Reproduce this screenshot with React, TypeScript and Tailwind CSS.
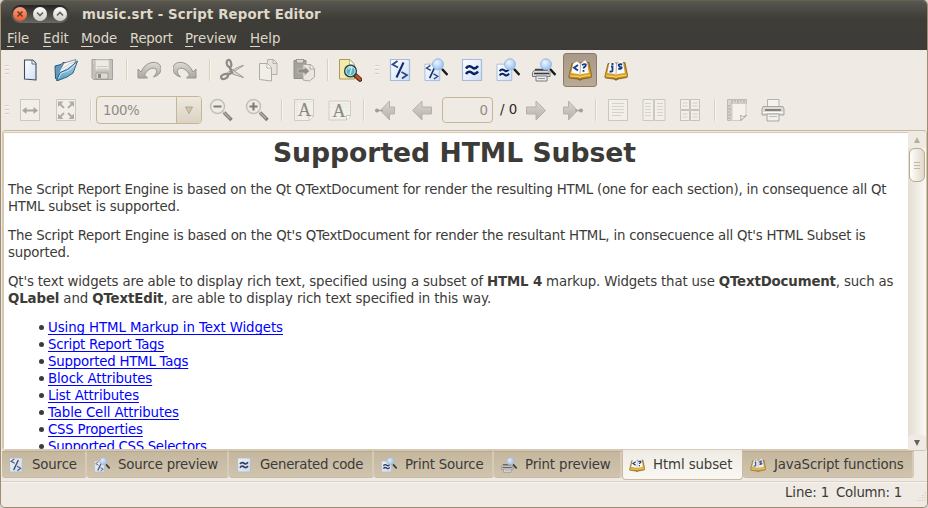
import React from "react";

type Kids = { children?: React.ReactNode };

const Icon = ({ children, size = 24, dim = false }: Kids & { size?: number; dim?: boolean }) => (
  <svg width={size} height={size} viewBox="0 0 24 24" fill="none" className={dim ? "shrink-0 opacity-80" : "shrink-0"}>
    {children}
  </svg>
);

const Cell = ({ children }: Kids) => <div className="flex h-9 w-9 shrink-0 items-center justify-center">{children}</div>;

const Sep = ({ wide = false }: { wide?: boolean }) => (
  <div className={`flex shrink-0 justify-center pl-[2px] ${wide ? "w-[11px]" : "w-[10px]"}`}>
    <div className="h-[22px] w-[2px] border-r border-[#f8f5ef] bg-[#d9d0bd]" />
  </div>
);

const Handle = () => (
  <div className="flex w-3 shrink-0 flex-col gap-[2px] pl-[5px]">
    {[0, 1, 2].map((i) => (
      <div key={i} className="h-[2px] w-[4px] border-b border-[#faf7f1] bg-[#d6cdb9]" />
    ))}
  </div>
);

/* ---- icon drawings, all on a 24 unit grid ---- */

const Defs = () => (
  <svg width="0" height="0" className="absolute">
    <defs>
      <linearGradient id="paper" x1="0" y1="0" x2="1" y2="1">
        <stop offset="0" stopColor="#ffffff" />
        <stop offset="1" stopColor="#cfdff5" />
      </linearGradient>
      <linearGradient id="blue" x1="0" y1="0" x2="0" y2="1">
        <stop offset="0" stopColor="#b5dcf0" />
        <stop offset="1" stopColor="#559bc3" />
      </linearGradient>
      <linearGradient id="grey" x1="0" y1="0" x2="0" y2="1">
        <stop offset="0" stopColor="#dedbd5" />
        <stop offset="1" stopColor="#a9a6a1" />
      </linearGradient>
      <linearGradient id="arrow" x1="0" y1="0" x2="0" y2="1">
        <stop offset="0" stopColor="#dad7d2" />
        <stop offset="1" stopColor="#b4b1ac" />
      </linearGradient>
      <linearGradient id="gold" x1="0" y1="0" x2="0" y2="1">
        <stop offset="0" stopColor="#b98420" />
        <stop offset=".75" stopColor="#dba62d" />
        <stop offset="1" stopColor="#8a5c0c" />
      </linearGradient>
      <radialGradient id="glass" cx=".4" cy=".35" r=".7">
        <stop offset="0" stopColor="#eef6ff" />
        <stop offset="1" stopColor="#8fbcf6" />
      </radialGradient>
    </defs>
  </svg>
);

const NewFile = () => (
  <>
    <path d="M6.500 2h8l3.500 3.500V22l-11.500-1z" fill="url(#paper)" stroke="#3d4b60" strokeWidth="1.100" strokeLinejoin="round" />
    <path d="M14 2v4h4" fill="#fff" stroke="#3d4b60" strokeWidth=".8" />
  </>
);
const OpenFolder = () => (
  <>
    <path d="M1 8l6-1.500 2-2 5 0v4L4.500 22 1.500 20.500z" fill="#5b9cc2" stroke="#31536a" />
    <path d="M4 16L10 5l12-3.500-3 9L7 18z" fill="#f5f6f7" stroke="#6a747d" strokeWidth=".8" />
    <path d="M8 11l8-5.500 5-1.500M6 15l9-6 6-2" stroke="#b9bfc5" strokeWidth=".8" />
    <path d="M2.500 22.500L6 14.500l7.500-3L23.500 3l-4.500 12-6 4-9 3.500z" fill="url(#blue)" stroke="#31617e" strokeLinejoin="round" />
    <path d="M4.500 20.500l2.500-5 7.500-3 7-6" stroke="#cfe9f5" strokeWidth=".9" />
  </>
);
const Save = () => (
  <>
    <path d="M2 1.500h20.500v20H3.500L2 20z" fill="#c4c0bb" stroke="#a5a19b" />
    <path d="M5.500 2h13.500v10h-13.500z" fill="#eeebe5" stroke="#d2cec8" />
    <path d="M7 8.500h10.500M7 11h10.500" stroke="#c9c5bf" />
    <path d="M6 15h12v6H6z" fill="#dedad4" stroke="#999691" strokeWidth=".8" />
    <path d="M8 16h3v4H8z" fill="#8b8782" />
    <path d="M3 3h1M3 5h1" stroke="#e7e3de" />
  </>
);
const Undo = () => (
  <path d="M1 11v9h9.500l-3-3c2-5 8.500-9 11.500-5.500 1.500 2.500 0 4.500-2.500 7.500 6-1.500 8-6 7.500-9.500C22.500 2 9 2 4 14z" fill="url(#grey)" stroke="#98958f" strokeWidth="1" strokeLinejoin="round" />
);
const Redo = () => <g transform="matrix(-1 0 0 1 24 0)"><Undo /></g>;
const Cut = () => (
  <>
    <path d="M23.500 7.500L9 16.500l-1.500-2L21 8z" fill="#f0ede8" stroke="#8b8882" strokeWidth=".8" />
    <path d="M10 10l13.500 9.500-11-3.500z" fill="#dedad4" stroke="#8b8882" strokeWidth=".8" />
    <ellipse cx="9" cy="5.500" rx="2.200" ry="3.600" transform="rotate(-15 9 5.500)" stroke="#8e8a84" strokeWidth="2.200" />
    <ellipse cx="4.500" cy="18.500" rx="3.600" ry="2.200" transform="rotate(-25 4.500 18.500)" stroke="#8e8a84" strokeWidth="2.200" />
    <path d="M9.500 9l2.500 5.500-4.500 2.500" stroke="#8e8a84" strokeWidth="2.500" />
  </>
);
const Copy = () => (
  <>
    <path d="M11.500 1.500h6l3.500 3.500v11.500h-10z" fill="#e7e3dc" stroke="#b4b0aa" />
    <path d="M17 1.500v4h4" stroke="#b4b0aa" />
    <path d="M3.500 5.500h8l4 4V23l-12-1.500z" fill="#f1eee8" stroke="#aeaaa4" />
    <path d="M11 5.500v4.500h4.500" fill="#fff" stroke="#b4b0aa" />
  </>
);
const Paste = () => (
  <>
    <path d="M2 2.500h12v18H2z" fill="#a5a19b" stroke="#928e88" />
    <path d="M4 1.500h8l-1 3.500H5z" fill="#dedad3" stroke="#8c8882" strokeWidth=".8" />
    <path d="M11 6.500h8l3.500 4V19l-5 4-6.500-1z" fill="#ebe7e0" stroke="#aca8a2" />
    <path d="M18 7v4h4" fill="#f6f3ee" stroke="#aca8a2" />
    <path d="M6 11h6.500V8.500L17.500 13l-5 4.500V15H6z" fill="#8f8b85" stroke="#d5d1ca" strokeWidth=".6" />
  </>
);
const PreviewDoc = () => (
  <>
    <path d="M1.500 1.500h10.500l4.500 5v14.500h-15z" fill="#f4eaa9" stroke="#a99b5e" />
    <path d="M11.500 2v5h5" fill="#fffce6" stroke="#b3a566" strokeWidth=".8" />
    <path d="M17 17l5 4.500" stroke="#432b1c" strokeWidth="4.600" strokeLinecap="round" />
    <path d="M18.500 18l3.500 3.300" stroke="#c65320" strokeWidth="2.800" strokeLinecap="round" />
    <circle cx="12.500" cy="13" r="5.800" fill="#58b4c2" stroke="#33474d" strokeWidth="1.600" />
    <circle cx="12.500" cy="13" r="4.600" stroke="#d3e5e7" />
    <path d="M10 11.500q2-3 4-2l-2 7" stroke="#b8f0ef" strokeWidth="1.300" />
  </>
);
const BluePage = () => <path d="M2.500 1.500h19v21h-19z" fill="url(#paper)" stroke="#a5bbdc" strokeWidth="1.200" />;
const CodeMarks = () => (
  <>
    <path d="M15.500 4.500L8.500 19.500" stroke="#162d6e" strokeWidth="2.100" />
    <path d="M9.500 3L4.500 6.500l5.500 3M13.500 14l5.500 3-5 3.500" stroke="#28468c" strokeWidth="1.700" />
  </>
);
const Waves = () => (
  <g stroke="#082161" strokeWidth="2.600">
    <path d="M6 10.500c2.500-4 5.500-1.500 7-.5s3 .5 5-2" />
    <path d="M6 16c2.500-4 5.500-1.500 7-.5s3 .5 5-2" />
  </g>
);
const Lens = () => (
  <>
    <path d="M18 11l5.500 6" stroke="#17191d" strokeWidth="2.500" />
    <circle cx="14" cy="6.300" r="5.500" fill="url(#glass)" stroke="#9db8dc" />
  </>
);
const Source = () => <><BluePage /><CodeMarks /></>;
const SourcePreview = () => (
  <><g transform="translate(-1 5) scale(.78)"><BluePage /><CodeMarks /></g><Lens /></>
);
const Generated = () => <><BluePage /><Waves /></>;
const PrintSource = () => <><g transform="translate(-1 5) scale(.78)"><BluePage /><Waves /></g><Lens /></>;
const Printer = () => (
  <>
    <path d="M6.500 1.500h11.500v8h-11.500z" fill="#f5f4f1" stroke="#a8a5a0" />
    <path d="M2 8.500h20l1 2.500v6H1v-6z" fill="#d8d6d2" stroke="#98958f" />
    <path d="M4 12h16" stroke="#5e5b57" strokeWidth="1.800" />
    <path d="M2 14.500h20" stroke="#fff" />
    <path d="M6 16h12v7H6z" fill="#f3f2ef" stroke="#98958f" />
    <path d="M8 18.500h8" stroke="#b8b5af" />
  </>
);
const PrintPreview = () => (
  <>
    <path d="M2 12.500h14l2 2v4H.5v-4z" fill="#dcdcda" stroke="#75787b" />
    <path d="M3 11.500h12" stroke="#414549" strokeWidth="1.600" />
    <path d="M2 15.500h15" stroke="#33383d" strokeWidth="1.500" />
    <path d="M4 18h11v5H4z" fill="#eee" stroke="#777b80" />
    <path d="M6 20.500h7" stroke="#919599" />
    <Lens />
  </>
);
const Book = ({ js = false }: { js?: boolean }) => (
  <>
    <path d="M4 5.500L.8 18.500l.5 1.500 8.200 1 2.500 1.300 2.500-1.300 8.500-1.500.7-1.500L21 4.500z" fill="url(#gold)" stroke="#7a5410" strokeWidth=".7" strokeLinejoin="round" />
    <path d="M2.300 18l8.200.6 1.500 1 1.500-1 8.700-1.600" stroke="#f4d06a" strokeWidth="1.200" />
    <path d="M5.200 5.500L9 3.500l3.500 2.500L17 2.200l2.300 2.800 1.500 10-7.300 1-1.500.8-1.500-.8-7.200-.9z" fill="#fafaf6" />
    <path d="M12.500 6L12 16.500" stroke="#a3a196" strokeWidth=".8" />
    {js ? (
      <g stroke="#173a91" strokeWidth="1.800">
        <path d="M7 8.500h1.500v4q0 1.500-3 1M7.500 6h2M18.200 6.500q-4-.8-3.500 1t3 2q-.2 2-3.500 1.200" />
      </g>
    ) : (
      <g stroke="#173a91" strokeWidth="1.800">
        <path d="M10 7L6 9.800l4 2.700M14 7q4-2 3.800.2c0 2-2.300 1.300-2.300 3.300M15.500 12v1.800" />
      </g>
    )}
  </>
);
const GreyPage = ({ children }: Kids) => (
  <><path d="M2.500 1.500h19v21h-19z" fill="#f2efe9" stroke="#cbc7c1" />{children}</>
);
const FitWidth = () => (
  <GreyPage>
    <path d="M7 12.500h10" stroke="#aaa69f" strokeWidth="1.800" />
    <path d="M8.500 9v7L4 12.500zM15.500 9v7l4.500-3.500z" fill="#aaa69f" />
  </GreyPage>
);
const FitPage = () => (
  <GreyPage>
    <path d="M6 6l4 4M18 6l-4 4M6 19l4-4M18 19l-4-4" stroke="#b0aca5" strokeWidth="1.800" />
    <path d="M4 3.500h5.500L4 9zM20 3.500h-5.500L20 9zM4 21h5.500L4 15.500zM20 21h-5.500l5.500-5.500z" fill="#b0aca5" />
  </GreyPage>
);
const Zoomer = ({ plus = false }: { plus?: boolean }) => (
  <>
    <path d="M15 14.500l7.500 7.500" stroke="#817e78" strokeWidth="3.600" />
    <path d="M14.500 14l6.500 6.500" stroke="#b4b0aa" strokeWidth="1.300" />
    <circle cx="8.500" cy="8.500" r="7" fill="#eeebe5" stroke="#c3bfb9" strokeWidth="1.500" />
    <path d={plus ? "M4.500 8.500h8M8.500 4.500v8" : "M4.500 8.500h8"} stroke="#7f7b76" strokeWidth="2.100" />
  </>
);
const LetterPage = ({ land = false }: { land?: boolean }) => (
  <>
    <path d={land ? "M1 3h21.500v15l-4 4H1z" : "M2.500 1.500h19v17l-4 4h-15z"} fill="#f2efe9" stroke="#d0ccc5" />
    <path d={land ? "M18.500 22v-4.500h4" : "M17 22v-4h4.500"} fill="#fff" stroke="#c6c2bb" />
    <path d={land ? "M2 6h20M3 9h18" : "M5 2v20M3 4h18"} stroke="#dedad4" strokeDasharray="1 1" />
    <text x={land ? 11 : 12.500} y={land ? 19 : 18} textAnchor="middle" fontSize="18" fontFamily="Liberation Serif, serif" fill="#8c8882" stroke="#8c8882" strokeWidth=".2">A</text>
  </>
);
const Arrow = ({ dot = false }: { dot?: boolean }) => (
  <>
    <path d={dot ? "M6.500 12.500L15.500 3v6h5v7h-5v6z" : "M2.500 12.500L12 3v6h9.500v7H12v6z"} fill="url(#arrow)" stroke="#b4b0aa" />
    {dot && <><path d="M2 12.500h7" stroke="#a8a49e" strokeWidth="1.500" /><circle cx="3" cy="12.500" r="2" fill="#a19d97" /></>}
  </>
);
const Flip = ({ children }: Kids) => <g transform="matrix(-1 0 0 1 24 0)">{children}</g>;
const PageLines = () => <GreyPage><path d="M6 5.500h12M6 8.500h12M6 11.500h12M6 14.500h12M6 17.500h9" stroke="#d6d2cb" /></GreyPage>;
const TwoPages = () => (
  <>
    <path d="M1 1.500h10.500v21H1zM12.500 1.500H23v21H12.500z" fill="#f2efe9" stroke="#cbc7c1" />
    <path d="M3 5.500h6M3 8.500h6M3 11.500h6M3 14.500h6M15 5.500h6M15 8.500h6M15 11.500h6M15 14.500h6M3 17.500h6M15 17.500h6" stroke="#d6d2cb" />
  </>
);
const FourPages = () => (
  <>
    <path d="M2.500 1.500h9v10h-9zM12.500 1.500h9v10h-9zM2.500 12.500h9v10h-9zM12.500 12.500h9v10h-9z" fill="#f2efe9" stroke="#c6c2bb" />
    <path d="M4.500 5h5M4.500 8h5M14.500 5h5M14.500 8h5M4.500 16h5M4.500 19h5M14.500 16h5M14.500 19h5" stroke="#d2cec7" />
  </>
);
const PageSetup = () => (
  <>
    <path d="M2.500 1.500h19v4H6v17H2.500z" fill="#d9d5cf" stroke="#bfbbb4" />
    <path d="M7 5.500h14V18l-5 4.500H7z" fill="#f5f2ed" stroke="#d0ccc5" />
    <path d="M15.500 22.500q1-2 0-5 3 2 6 0z" fill="#fff" stroke="#aaa69f" />
    <path d="M7 2v3M10 2v2M13 2v3M16 2v2M19 2v3M3 8h2M3 11h3M3 14h2M3 17h3M3 20h2" stroke="#9e9a94" strokeWidth=".8" />
  </>
);

const MENUS = [
  { label: "File", cls: "w-9" },
  { label: "Edit", cls: "w-[38px]" },
  { label: "Mode", cls: "w-[49px]" },
  { label: "Report", cls: "w-[55px] tracking-[-0.25px]" },
  { label: "Preview", cls: "w-[65px]" },
  { label: "Help", cls: "w-10" },
];

const LINKS = [
  { label: "Using HTML Markup in Text Widgets", cls: "tracking-[-0.09px]" },
  { label: "Script Report Tags", cls: "tracking-[-0.27px]" },
  { label: "Supported HTML Tags", cls: "tracking-[-0.22px]" },
  { label: "Block Attributes", cls: "tracking-[-0.12px]" },
  { label: "List Attributes", cls: "tracking-[-0.16px]" },
  { label: "Table Cell Attributes", cls: "tracking-[-0.13px]" },
  { label: "CSS Properties", cls: "tracking-[-0.22px]" },
  { label: "Supported CSS Selectors", cls: "tracking-[-0.31px]" },
];

const TABS = [
  { label: "Source", w: "w-[85px] pl-[6px] tracking-[-0.15px]", icon: <Source /> },
  { label: "Source preview", w: "w-[142px] pl-[7px] tracking-[-0.18px]", icon: <SourcePreview /> },
  { label: "Generated code", w: "w-[145px] pl-[7px] tracking-[-0.28px]", icon: <Generated /> },
  { label: "Print Source", w: "w-[120px] pl-[7px] tracking-[-0.18px]", icon: <PrintSource /> },
  { label: "Print preview", w: "w-[128px] pl-[7px] tracking-[-0.14px]", icon: <PrintPreview /> },
  { label: "Html subset", w: "w-[121px] pl-[6px] tracking-[-0.1px]", icon: <Book />, active: true },
  { label: "JavaScript functions", w: "w-[171px] pl-[7px] tracking-[-0.14px]", icon: <Book js /> },
];

const RoundButton = ({ close = false, d }: { close?: boolean; d: string }) => (
  <div className={`flex size-[14px] items-center justify-center rounded-full ${close ? "bg-linear-to-b from-[#f8a181] to-[#e8592c]" : "bg-linear-to-b from-white to-[#cfccc6]"}`}>
    <svg width="8" height="8" viewBox="0 0 8 8" fill="none">
      <path d={d} stroke={close ? "#6e3926" : "#65625b"} strokeWidth="1.600" />
    </svg>
  </div>
);

export default function App() {
  return (
    <div className="h-[508px] w-[928px] overflow-hidden bg-[#d8d8d8] font-['DejaVu_Sans',sans-serif] text-[13.33px] leading-[17px] whitespace-nowrap text-[#3c3b37]">
      <Defs />
      <div className="flex h-[508px] flex-col overflow-hidden rounded-[5px] border border-[#a08d70] border-t-[#68604f] bg-[#efebe4]">
        <header className="-mx-px h-[49px] shrink-0 border-x border-[#5b5347] bg-linear-to-b from-[#585750] via-[#3e3d38] via-35% to-[#3c3b37] text-[#dfd8c8]">
          <div className="flex h-[26px] items-center pl-[10px]">
            <div className="flex h-[18px] w-[58px] items-center justify-between rounded-full bg-linear-to-b from-[#252420] to-[#6a6963] px-[2px]">
              <RoundButton close d="M1.500 1.500l5 5m0-5l-5 5" />
              <RoundButton d="M1 2.500l3 3 3-3" />
              <RoundButton d="M1 5.500l3-3 3 3" />
            </div>
            <h1 className="ml-[13px] font-bold tracking-[0.13px]">music.srt - Script Report Editor</h1>
          </div>
          <nav className="flex h-[23px] items-center pl-[6px]">
            {MENUS.map(({ label, cls }) => (
              <span key={label} className={`${cls} shrink-0`}>
                <span className="border-b border-[#dfd8c8]">{label[0]}</span>{label.slice(1)}
              </span>
            ))}
          </nav>
        </header>

        <div className="-ml-px flex h-10 shrink-0 items-center">
          <Handle />
          <Cell><Icon><NewFile /></Icon></Cell>
          <Cell><Icon><OpenFolder /></Icon></Cell>
          <Cell><Icon><Save /></Icon></Cell>
          <Sep wide />
          <Cell><Icon><Undo /></Icon></Cell>
          <Cell><Icon><Redo /></Icon></Cell>
          <Sep wide />
          <Cell><Icon><Cut /></Icon></Cell>
          <Cell><Icon><Copy /></Icon></Cell>
          <Cell><Icon><Paste /></Icon></Cell>
          <Sep />
          <Cell><Icon><PreviewDoc /></Icon></Cell>
          <div className="w-[2px]" />
          <Handle />
          <Cell><Icon><Source /></Icon></Cell>
          <Cell><Icon><SourcePreview /></Icon></Cell>
          <Cell><Icon><Generated /></Icon></Cell>
          <Cell><Icon><PrintSource /></Icon></Cell>
          <Cell><Icon><PrintPreview /></Icon></Cell>
          <Cell>
            <div className="flex size-[34px] items-center justify-center rounded-[3px] border border-[#8d7b65] bg-linear-to-b from-[#a9998a] to-[#b9aa98]">
              <Icon><Book /></Icon>
            </div>
          </Cell>
          <Cell><Icon><Book js /></Icon></Cell>
        </div>

        <div className="-ml-px flex h-10 shrink-0 items-center">
          <Handle />
          <Cell><Icon><FitWidth /></Icon></Cell>
          <Cell><Icon><FitPage /></Icon></Cell>
          <Sep wide />
          <div className="-mt-px ml-px flex h-7 w-[106px] overflow-hidden rounded-[4px] border border-[#c5b698] text-[#8f8b84]">
            <span className="flex-1 pt-[5px] pl-[6px] tracking-[-0.5px]">100%</span>
            <span className="flex w-[25px] items-center justify-center border-l border-[#c5b698] bg-linear-to-b from-[#eee8df] to-[#dbd2c3]">
              <svg width="8" height="8" viewBox="0 0 8 8"><path d="M.5 1h7L4 7.500z" fill="#d0c5ad" stroke="#a69b84" strokeWidth=".8" /></svg>
            </span>
          </div>
          <div className="w-px" />
          <Cell><Icon><Zoomer /></Icon></Cell>
          <Cell><Icon><Zoomer plus /></Icon></Cell>
          <Sep wide />
          <Cell><Icon><LetterPage /></Icon></Cell>
          <Cell><Icon><LetterPage land /></Icon></Cell>
          <Sep />
          <Cell><Icon><Arrow dot /></Icon></Cell>
          <Cell><Icon><Arrow /></Icon></Cell>
          <div className="-mt-px ml-[2px] h-[26px] w-[51px] rounded-[4px] border border-[#c5b698] pt-[4px] pr-[4px] text-right text-[#8f8b84]">0</div>
          <span className="-mt-px w-[25px] pl-[7px] text-[#282725]">/ 0</span>
          <Cell><Icon><Flip><Arrow /></Flip></Icon></Cell>
          <Cell><Icon><Flip><Arrow dot /></Flip></Icon></Cell>
          <Sep />
          <Cell><Icon><PageLines /></Icon></Cell>
          <Cell><Icon><TwoPages /></Icon></Cell>
          <Cell><Icon><FourPages /></Icon></Cell>
          <Sep wide />
          <Cell><Icon><PageSetup /></Icon></Cell>
          <Cell><Icon dim><Printer /></Icon></Cell>
        </div>

        <div className="ml-px flex h-[321px] w-[925px] shrink-0 overflow-hidden rounded-[4px] border border-[#d3c6b0] border-t-[#c8b99e] pt-px">
          <main className="h-[318px] w-[906px] shrink-0 overflow-hidden border border-[#d7cbb8] bg-white pl-[4px]">
            <h2 className="mt-[3px] h-[34px] pr-[7px] text-center text-[26.67px] leading-[34px] font-bold tracking-[-0.05px]">Supported HTML Subset</h2>
            <p className="mt-[11px]">
              <span className="tracking-[-0.217px]">The Script Report Engine is based on the Qt QTextDocument for render the resulting HTML (one for each section), in consequence all Qt</span><br />
              <span className="tracking-[-0.2px]">HTML subset is supported.</span>
            </p>
            <p className="mt-3">
              <span className="tracking-[-0.205px]">The Script Report Engine is based on the Qt's QTextDocument for render the resultant HTML, in consecuence all Qt's HTML Subset is</span><br />
              <span className="tracking-[-0.2px]">suported.</span>
            </p>
            <p className="mt-3">
              <span className="tracking-[-0.156px]">Qt's text widgets are able to display rich text, specified using a subset of <b>HTML 4</b> markup. Widgets that use <b>QTextDocument</b>, such as</span><br />
              <span className="tracking-[-0.12px]"><b>QLabel</b> and <b>QTextEdit</b>, are able to display rich text specified in this way.</span>
            </p>
            <ul className="mt-3 pl-[31px]">
              {LINKS.map(({ label, cls }) => (
                <li key={label} className="flex h-[17px] items-center">
                  <span className="mr-[4px] size-[5px] rounded-full bg-[#3c3b37]" />
                  <a className={`${cls} text-[#0000ff] underline decoration-1 underline-offset-2 [text-decoration-skip-ink:none]`}>{label}</a>
                </li>
              ))}
            </ul>
          </main>
          <div className="-ml-px flex flex-1 flex-col items-center bg-linear-to-r from-[#e4ddd1] to-[#fbf9f6]">
            <div className="flex h-4 w-full shrink-0 items-center justify-center bg-[#efebe4]">
              <svg width="6" height="6" viewBox="0 0 6 6"><path d="M3 0l3 6H0z" fill="#b9ad98" /></svg>
            </div>
            <div className="flex h-[34px] w-4 shrink-0 flex-col items-center justify-center gap-[2px] rounded-[6px] border border-[#b9a98d] bg-linear-to-r from-white to-[#e0d8ca]">
              <i className="h-px w-[6px] bg-[#c6b89f]" /><i className="h-px w-[6px] bg-[#c6b89f]" /><i className="h-px w-[6px] bg-[#c6b89f]" />
            </div>
            <div className="mt-auto flex h-[15px] w-full items-center justify-center rounded-t-[4px] bg-[#efebe4]">
              <svg width="6" height="6" viewBox="0 0 6 6"><path d="M0 0h6L3 6z" fill="#65625b" /></svg>
            </div>
          </div>
        </div>

        <div className="flex h-[31px] shrink-0 items-start border-b border-[#dcd3c4] pl-px">
          {TABS.map((t) => (
            <div
              key={t.label}
              className={`${t.w} flex shrink-0 items-center ${
                t.active
                  ? "-mt-px h-[30px] rounded-b-[4px] border border-t-0 border-[#c9baa0] bg-linear-to-b from-[#efebe4] to-[#faf8f4]"
                  : "h-[27px] rounded-b-[3px] border-t border-r-2 border-b border-t-[#baaa8e] border-r-[#d6cbb8] border-b-[#c9bca5] bg-linear-to-b from-[#c5b79e] to-[#d0c4ae]"
              }`}
            >
              <Icon size={16} dim={!t.active}>{t.icon}</Icon>
              <span className="ml-2">{t.label}</span>
            </div>
          ))}
        </div>

        <footer className="relative flex flex-1 items-center justify-end border-t border-[#f7f4ef] pr-[25px] pb-[5px]">
          <span className="tracking-[-0.15px]">Line: 1</span>
          <span className="ml-[7px] tracking-[-0.25px]">Column: 1</span>
          <svg width="12" height="12" viewBox="0 0 12 12" className="absolute right-0 bottom-1">
            <path d="M10 1v10M7.500 4v7M5 6.500V11M2.500 9v2" stroke="#cfc5b3" strokeDasharray="1 1.500" />
          </svg>
        </footer>
      </div>
    </div>
  );
}
